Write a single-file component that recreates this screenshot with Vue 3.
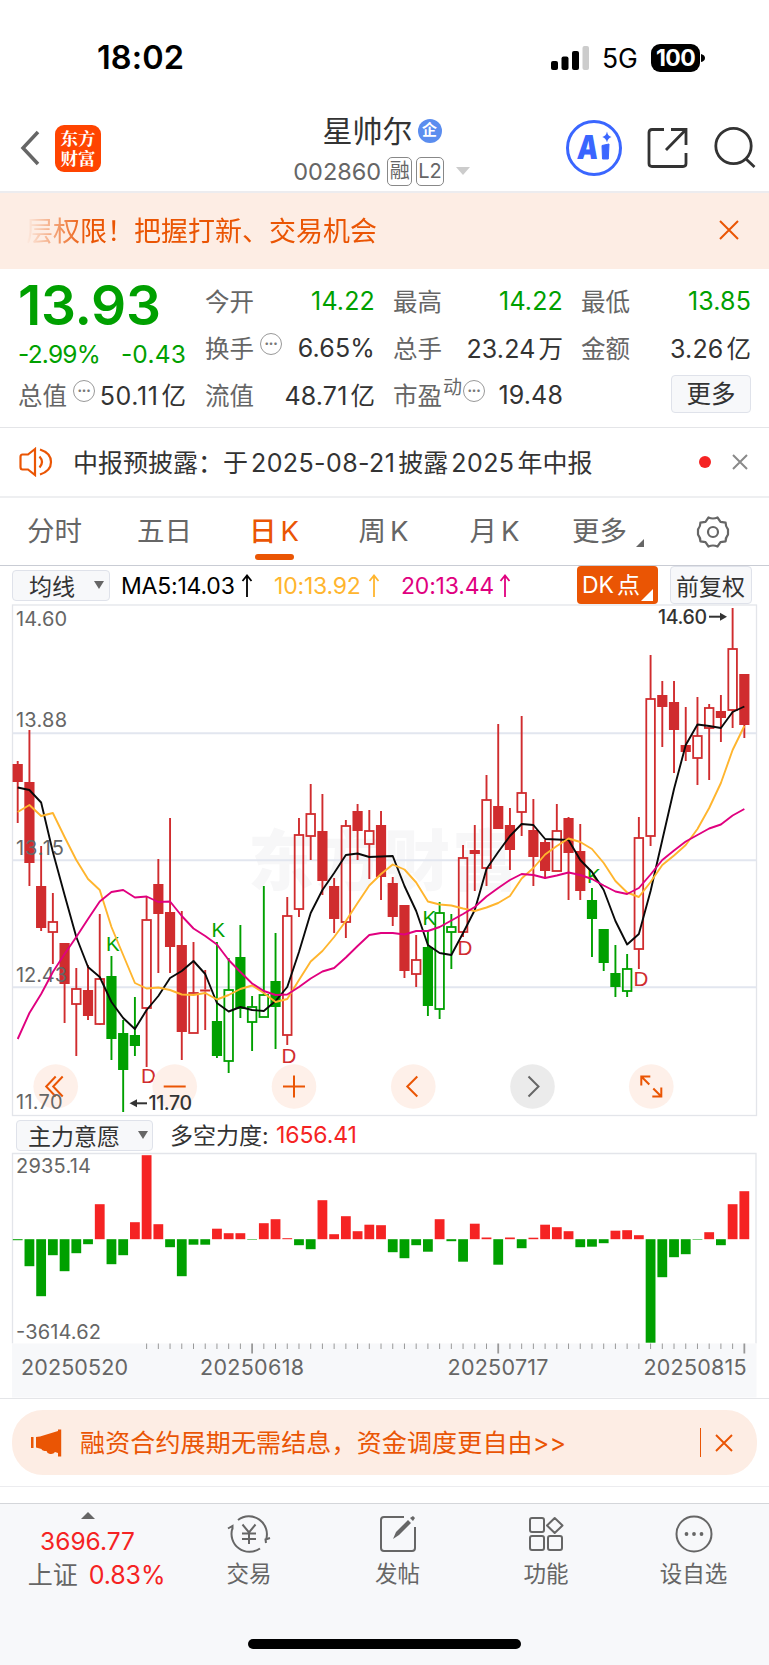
<template>
  <div class="page">
    <!-- Status Bar -->
    <div class="status-bar">
      <span class="time">18:02</span>
      <svg class="signal" width="38" height="26" viewBox="0 0 38 26">
        <rect x="0" y="16" width="7" height="9" rx="2" />
        <rect x="10.5" y="11.500" width="7" height="13.500" rx="2" />
        <rect x="21" y="6" width="7" height="19" rx="2" />
        <rect x="31.500" y="1" width="6.500" height="24" rx="2" fill="#ccc" />
      </svg>
      <span class="network">5G</span>
      <span class="battery">100</span>
      <svg class="nub" width="4" height="8" viewBox="0 0 4 8"><path d="M0 0Q4 1 4 4T0 8z" /></svg>
    </div>

    <!-- Header -->
    <header class="header">
      <svg class="back" width="20" height="36" viewBox="0 0 20 36"><path d="M18 2L3 18l15 16" fill="none" stroke="#666" stroke-width="3.500" /></svg>
      <div class="logo">东方财富</div>
      <div class="title">
        <div class="name">星帅尔<i class="corp">企</i></div>
        <div class="code"><span class="code-no">002860</span><em>融</em><em>L2</em><b class="down"></b></div>
      </div>
      <svg class="ai" width="58" height="58" viewBox="0 0 58 58">
        <circle cx="29" cy="29" r="26.500" fill="none" stroke="#3a66ff" stroke-width="3" />
        <text x="15" y="40" class="ai-text" transform="skewX(-5)" textLength="21" lengthAdjust="spacingAndGlyphs">A</text>
        <path d="M37 26.500L44 25L43.300 40H37.500z" fill="#3a66ff" stroke="#3a66ff" stroke-width="1" stroke-linejoin="round" />
        <path d="M42 12.500Q42.800 17.200 46.500 18Q42.800 19 42 23.500Q41 19 37.300 18Q41 17.200 42 12.500z" fill="#3a66ff" />
      </svg>
      <svg class="share" width="42" height="42" viewBox="0 0 42 42" fill="none" stroke="#333" stroke-width="2.800">
        <path d="M17 2.500H5Q2 2.500 2 5.500V36.500Q2 39.500 5 39.500H36Q39 39.500 39 36.500V26" />
        <path d="M24 2.500H39V18M39 2.500L19 23" />
      </svg>
      <svg class="search" width="42" height="44" viewBox="0 0 42 44" fill="none" stroke="#333" stroke-width="2.800">
        <circle cx="19.500" cy="20" r="17.700" /><path d="M31.500 32.500L40.500 41" />
      </svg>
    </header>

    <!-- Scrolling banner -->
    <div class="banner">
      <span class="banner-text">层权限！把握打新、交易机会</span>
      <svg width="20" height="20" viewBox="0 0 20 20"><path d="M1 1L19 19M19 1L1 19" stroke="#ea5504" stroke-width="2" /></svg>
    </div>

    <!-- Quote -->
    <section class="quote">
      <div class="q-main">
        <div class="price">13.93</div>
        <div class="change"><span class="pct">-2.99%</span><span>-0.43</span></div>
        <div class="cell total"><label>总值</label><i class="more-dot">•••</i><span class="val">50.11<u>亿</u></span></div>
      </div>
      <div class="q-grid">
        <div class="cell" v-for="c in cells" :key="c.label">
          <label>{{ c.label }}</label><sup v-if="c.sup">{{ c.sup }}</sup><i v-if="c.tip" class="more-dot">•••</i>
          <span class="val" :class="{ down: c.down }">{{ c.value }}<u v-if="c.unit">{{ c.unit }}</u></span>
        </div>
        <div class="cell last"><button class="btn-more">更多</button></div>
      </div>
    </section>

    <!-- Notice -->
    <div class="notice">
      <svg width="34" height="30" viewBox="0 0 34 30" fill="none" stroke="#ea5504" stroke-width="2.200">
        <path d="M16 2L9 7.500H3.500Q1.500 7.500 1.500 10V20Q1.500 22.500 3.500 22.500H9L16 28z" />
        <path d="M20.500 9.500Q25.500 15 20.500 20.500M21 2.500Q32 6 32 15T21 27.500" />
      </svg>
      <p>中报预披露：于<span>2025-08-21</span>披露<span>2025</span>年中报</p>
      <b class="dot"></b>
      <svg width="16" height="16" viewBox="0 0 16 16"><path d="M1 1L15 15M15 1L1 15" stroke="#8a8a8a" stroke-width="2" /></svg>
    </div>

    <!-- Period Tabs -->
    <nav class="tabs">
      <span v-for="t in tabs" :key="t.label" class="tab" :class="{ active: t.label === activeTab, menu: t.menu }">
        {{ t.label }}<u v-if="t.k">K</u>
      </span>
      <svg class="gear" width="34" height="34" viewBox="0 0 34 34" fill="none" stroke="#666" stroke-width="2.200">
        <path d="M12.500 2.500Q17 4.500 21.500 2.500L24.500 6.800L29.600 7.600Q29.400 11 32 14.500V19.500Q29.400 23 29.600 26.400L24.500 27.200L21.500 31.500Q17 29.500 12.500 31.500L9.500 27.200L4.400 26.400Q4.600 23 2 19.500V14.500Q4.600 11 4.400 7.600L9.500 6.800z" stroke-linejoin="round" />
        <circle cx="17" cy="17" r="5" />
      </svg>
    </nav>

    <!-- MA toolbar -->
    <div class="ma-bar">
      <div class="select sel-ma"><span>均线</span><b class="caret"></b></div>
      <div class="ma" v-for="m in maList" :key="m.text" :class="m.cls">
        <span>{{ m.text }}</span>
        <svg width="12" height="24" viewBox="0 0 12 24"><path d="M6 23V2M1.500 7L6 1.500L10.500 7" fill="none" stroke="currentColor" stroke-width="1.800" /></svg>
      </div>
      <div class="dk">DK<u>点</u></div>
      <div class="select fq">前复权</div>
    </div>

    <!-- K line chart -->
    <svg class="kline" width="769" height="514" viewBox="0 604 769 514">
      <text x="248" y="885" class="watermark" textLength="270">东方财富</text>
      <rect x="12.500" y="605" width="744" height="510.500" fill="none" stroke="#e3e5ea" stroke-width="1.300" />
      <path d="M13 733.200H756M13 860.300H756M13 987.300H756" stroke="#e2e6ef" stroke-width="1.900" />
      <g v-for="(c, i) in candles" :key="i" :stroke="c.color" :fill="c.hollow ? 'none' : c.color">
        <path :d="c.wick" stroke-width="1.900" />
        <rect :x="c.x - c.w / 2" :y="c.top" :width="c.w" :height="c.h" :stroke-width="c.hollow ? 1.800 : 0" />
      </g>
      <text v-for="l in priceLabels" :key="l.text" x="16" :y="l.y" class="axis" :textLength="l.w">{{ l.text }}</text>
      <text v-for="m in marks" :key="m.x" :x="m.x" :y="m.y" class="mark" :fill="m.t === 'K' ? GREEN : RED">{{ m.t }}</text>
      <g v-for="b in tools" :key="b.x" :transform="`translate(${b.x} 1086.500)`">
        <circle r="22.300" :fill="b.off ? '#ebebeb' : '#fef0e9'" />
        <path :d="b.d" fill="none" :stroke="b.off ? '#666' : '#ea5504'" stroke-width="2" />
      </g>
      <text x="16" y="1109" class="axis" textLength="46.500">11.70</text>
      <polyline v-for="l in lines" :key="l.color" :points="l.points" :stroke="l.color" fill="none" stroke-width="1.900" stroke-linejoin="round" />
      <text x="658" y="624" class="extreme" textLength="49">14.60</text>
      <path d="M709 616.700H722" stroke="#333" stroke-width="2" /><path d="M720 612.700L727 616.700L720 620.700z" fill="#333" />
      <text x="148.500" y="1110" class="extreme" textLength="43.500">11.70</text>
      <path d="M135 1103.300H147" stroke="#333" stroke-width="2" /><path d="M137 1099.300L129.500 1103.300L137 1107.300z" fill="#333" />
    </svg>

    <!-- Indicator toolbar -->
    <div class="sub-bar">
      <div class="select sel-sub"><span>主力意愿</span><b class="caret"></b></div>
      <span class="sub-label">多空力度:</span><span class="sub-val">1656.41</span>
    </div>

    <!-- Indicator chart -->
    <svg class="indicator" width="769" height="246" viewBox="0 1152 769 246">
      <path d="M12.500 1343.500V1153.500H756V1343.500" fill="none" stroke="#e3e5ea" stroke-width="1.300" />
      <rect x="12" y="1343.500" width="744.500" height="54" fill="#f7f8fa" />
      <rect
        v-for="(v, i) in power" :key="i"
        :x="px(i) - 4.900" :y="v > 0 ? 1239.200 - v : 1239.200" width="9.800" :height="Math.abs(v)"
        :fill="v > 0 ? '#f52323' : GREEN"
      />
      <path v-for="t in ticks" :key="t.x" :d="`M${t.x} 1343.500v${t.big ? 10 : 5.500}`" stroke="#999" :stroke-width="t.big ? 1.800 : 1" />
      <text x="16" y="1173" class="axis" textLength="75">2935.14</text>
      <text x="16" y="1339" class="axis" textLength="85">-3614.62</text>
      <text v-for="d in dates" :key="d.text" :x="d.x" y="1375" class="date" :textLength="d.w">{{ d.text }}</text>
    </svg>

    <!-- Promo -->
    <div class="promo-wrap">
      <div class="promo">
        <svg width="31" height="28" viewBox="0 0 31 28" fill="#ea5504">
          <path d="M0 8h2.500v11H0zM5 8L9 7.500L27 2V0.500h3.200V27.500H27V24L24 23Q22.500 25.500 19 25Q16 24.500 15.500 22Q11 22 10.500 20L5 18.500z" />
        </svg>
        <p>融资合约展期无需结息，资金调度更自由&gt;&gt;</p>
        <b class="bar"></b>
        <svg width="18" height="18" viewBox="0 0 18 18"><path d="M1 1L17 17M17 1L1 17" stroke="#ea5504" stroke-width="1.900" /></svg>
      </div>
    </div>

    <!-- Bottom Bar -->
    <footer class="bottom">
      <div class="index">
        <b class="up"></b>
        <div class="idx-val">3696.77</div>
        <div class="idx-row"><span>上证</span><span class="idx-pct">0.83%</span></div>
      </div>
      <div class="action">
        <svg width="44" height="38" viewBox="0 0 44 38" fill="none" stroke="#666" stroke-width="2">
          <path d="M11 5A18 18 0 0 1 39 25M39 28L38.500 24.500L43 23M33 33.500A18 18 0 0 1 5.500 13M1 13.500L5.500 11V14.500" />
          <path d="M15.500 9.500L22 17.500L28.500 9.500M22 17.500V29M15 18.500H29M15 24H29" />
        </svg>
        <span>交易</span>
      </div>
      <div class="action">
        <svg width="38" height="38" viewBox="0 0 38 38" fill="none" stroke="#666" stroke-width="2">
          <path d="M25 2H5Q2 2 2 5V33Q2 36 5 36H33Q36 36 36 33V12" />
          <path d="M14 24L17 17L29 5L32 8L20 20zM31 3L34 1L36 3L34 6z" fill="#666" stroke="none" />
        </svg>
        <span>发帖</span>
      </div>
      <div class="action">
        <svg width="36" height="38" viewBox="0 0 36 38" fill="none" stroke="#666" stroke-width="2">
          <rect x="2" y="3" width="14" height="14" rx="2" /><rect x="2" y="21" width="14" height="14" rx="2" />
          <rect x="20" y="21" width="14" height="14" rx="2" /><path d="M26.700 3L34.500 10.500L26.700 18L19 10.500z" stroke-linejoin="round" />
        </svg>
        <span>功能</span>
      </div>
      <div class="action">
        <svg width="38" height="38" viewBox="0 0 38 38" fill="#666">
          <circle cx="19" cy="19" r="17.500" fill="none" stroke="#666" stroke-width="2" />
          <circle cx="11.500" cy="19" r="1.900" /><circle cx="19" cy="19" r="1.900" /><circle cx="26.500" cy="19" r="1.900" />
        </svg>
        <span>设自选</span>
      </div>
      <div class="home"></div>
    </footer>
  </div>
</template>

<script setup>
import { ref, computed } from 'vue'

const RED = '#d02c2e'
const GREEN = '#00a000'

const cells = [
  { label: '今开', value: '14.22', down: true },
  { label: '最高', value: '14.22', down: true },
  { label: '最低', value: '13.85', down: true },
  { label: '换手', value: '6.65%', tip: true },
  { label: '总手', value: '23.24', unit: '万' },
  { label: '金额', value: '3.26', unit: '亿' },
  { label: '流值', value: '48.71', unit: '亿' },
  { label: '市盈', value: '19.48', sup: '动', tip: true },
]

const activeTab = ref('日')
const tabs = [
  { label: '分时' },
  { label: '五日' },
  { label: '日', k: true },
  { label: '周', k: true },
  { label: '月', k: true },
  { label: '更多', menu: true },
]

const maList = [
  { text: 'MA5:14.03', cls: 'ma5' },
  { text: '10:13.92', cls: 'ma10' },
  { text: '20:13.44', cls: 'ma20' },
]

// x centre of the i-th trading day
const px = i => 17.7 + i * 11.72

// type (r/g filled, R/G hollow), high, body top, body bottom, low
const kdata = [
  ['r', 761, 764, 782, 823], ['r', 730, 782, 863, 886], ['r', 846, 886, 928, 931], ['R', 893, 922, 932, 964],
  ['r', 943, 943, 984, 1023], ['R', 968, 989, 1004, 1056], ['r', 965, 990, 1016, 1020], ['R', 914, 979, 1024, 1025],
  ['g', 956, 976, 1039, 1060], ['g', 1020, 1033, 1070, 1112], ['g', 997, 1035, 1046, 1056], ['R', 897, 920, 1008, 1067],
  ['r', 859, 884, 914, 973], ['r', 818, 912, 947, 973], ['r', 911, 945, 1032, 1060], ['R', 942, 993, 1033, 1033],
  ['r', 970, 989.5, 991.5, 1030], ['g', 942, 1021, 1056, 1058], ['G', 958, 990, 1061, 1073], ['g', 925, 957, 1009, 1018],
  ['G', 996, 1007, 1022, 1051], ['G', 886, 995, 1017, 1017], ['g', 933, 981, 1007, 1049], ['R', 897, 916, 1035, 1045],
  ['R', 818, 835, 909, 917], ['R', 784, 814, 836, 860], ['r', 794, 831, 881, 895], ['r', 878, 886, 919, 933],
  ['R', 820, 826, 922, 938], ['r', 804, 811, 831, 860], ['R', 810, 831, 844, 879], ['r', 811, 825, 877, 900],
  ['r', 877, 883, 917, 926], ['r', 905, 905, 971, 978], ['R', 935, 960, 974, 987], ['g', 930, 947, 1006, 1016],
  ['G', 902, 913, 1009, 1019], ['G', 914, 927, 932, 969], ['R', 845, 858, 932, 937], ['r', 825, 850, 854, 891],
  ['R', 775, 800, 868, 886], ['r', 724, 806, 829, 829], ['r', 808, 825, 850, 870], ['R', 716, 793, 812, 836],
  ['r', 799, 830, 857, 886], ['r', 840, 842, 871, 879], ['R', 804, 831, 871, 871], ['r', 817, 818, 853, 900],
  ['r', 824, 851, 891, 900], ['g', 888, 900, 919, 957], ['g', 929, 929, 963, 971], ['g', 945, 973, 987, 997],
  ['G', 954, 969, 991, 997], ['R', 817, 838, 949, 969], ['R', 655, 699, 836, 846], ['r', 681, 695, 707, 747],
  ['r', 681, 702, 730, 773], ['r', 707, 745, 752, 761], ['R', 697, 736, 758, 785], ['R', 704, 708, 728, 780],
  ['r', 695, 711, 718, 742], ['R', 608, 649, 710, 728], ['r', 674, 674, 725, 738],
]

const candles = computed(() => kdata.map(([t, high, top, bottom, low], i) => {
  const x = px(i)
  const hollow = t === 'R' || t === 'G'
  return {
    x, top, hollow,
    w: hollow ? 8.6 : 10.2,
    h: bottom - top,
    color: t.toLowerCase() === 'r' ? RED : GREEN,
    wick: `M${x} ${high}V${top}M${x} ${bottom}V${low}`,
  }
}))

const ma5 = [
  787.5, 790, 802.5, 852, 895, 937, 967, 977, 1002, 1018, 1029, 1010, 996, 978, 971, 961, 974, 1003, 1011.5, 1007,
  1010, 1011, 1001, 987, 952, 913, 890, 873, 855, 853.5, 857, 856.5, 856, 886, 911, 945, 953, 955, 933, 910,
  869, 852, 836, 824, 825, 839, 839.5, 840, 860, 872, 890, 921, 944.5, 934, 891, 840, 789, 745, 724.5, 726,
  728, 712, 706.5,
]
const ma10 = [
  812, 805, 816, 813, 837, 860, 879, 890, 927, 955, 983, 988.5, 987.5, 990, 994.5, 995, 993, 999.5, 995, 989,
  985.5, 993, 1002, 999, 980, 961.5, 951, 937, 921, 903, 885.5, 874, 864.5, 869.5, 882.5, 901.5, 904.5, 905.5, 908.5, 911,
  907.5, 903, 896, 878.5, 868, 854.5, 846, 838.5, 842, 849, 863, 881, 892.5, 897, 882, 865, 855.5, 845, 829, 808,
  783, 750, 726,
]
const ma20 = [
  1039, 1013, 994, 972, 954, 937, 919, 901.5, 892, 890, 897.5, 896.5, 902, 901.5, 916, 928.5, 936, 944.5, 960, 972,
  983.5, 991, 995, 994.5, 987, 978.5, 971.5, 968, 957.5, 946, 935, 933, 933, 934.5, 931, 931, 927, 920.5, 914, 907,
  896.5, 888, 880, 874, 875, 878, 875.5, 872.5, 875, 879, 885.5, 891.5, 894, 888, 874.5, 860, 850.5, 841.5, 835, 828.5,
  824.5, 815.5, 809,
]
const toPoints = arr => arr.map((y, i) => `${px(i)},${y}`).join(' ')
const lines = [
  { color: '#0a0a0a', points: toPoints(ma5) },
  { color: '#ffb52e', points: toPoints(ma10) },
  { color: '#e0007f', points: toPoints(ma20) },
]

const priceLabels = [
  { text: '14.60', y: 626, w: 51 },
  { text: '13.88', y: 726.5, w: 51 },
  { text: '13.15', y: 854.5, w: 48 },
  { text: '12.43', y: 981.5, w: 51 },
]

const marks = [
  { t: 'K', x: 106, y: 950.5 },
  { t: 'D', x: 141, y: 1083 },
  { t: 'K', x: 211.5, y: 936.5 },
  { t: 'D', x: 281.5, y: 1062.5 },
  { t: 'K', x: 422.5, y: 924.5 },
  { t: 'D', x: 457.5, y: 954.5 },
  { t: 'K', x: 587, y: 882.5 },
  { t: 'D', x: 633.5, y: 986 },
]

const tools = [
  { x: 55.7, d: 'M0 -10L-9.5 0L0 10M7 -10L-2.500 0L7 10' },
  { x: 174.7, d: 'M-11 0H11' },
  { x: 294, d: 'M-11 0H11M0 -11V11' },
  { x: 413.3, d: 'M4 -10L-6 0L4 10' },
  { x: 532.5, d: 'M-4 -10L6 0L-4 10', off: true },
  { x: 651.3, d: 'M-10 -1V-10H-1M-10 -10L-2 -2M10 1V10H1M10 10L2 2' },
]

// bar heights around the zero line
const power = [
  -1, -27, -57, -16, -32, -14, -5, 35, -25, -16, 17, 84, 15, -8, -37, -5.5, -5.5, 10.5, 6, 6,
  -0.5, 16, 20, 1, -6, -10, 39, 5, 23, 8, 14.5, 14, -13, -19, -6, -12.5, 20, -2, -22.5, 15.5,
  1.7, -25.5, 1.7, -9, 1.5, 14.5, 12, 8, -8, -7.5, -4, 8.5, 9, 4, -103.5, -38, -18, -15, -0.5, 7,
  -6, 35, 48,
]

const ticks = Array.from({ length: 52 }, (_, k) => k + 11)
  .map(i => ({ x: px(i), big: [20, 41, 62].includes(i) }))

const dates = [
  { text: '20250520', x: 21, w: 107 },
  { text: '20250618', x: 200, w: 104 },
  { text: '20250717', x: 447.5, w: 101 },
  { text: '20250815', x: 643.5, w: 103 },
]
</script>

<style>
body { background: #fff; }
</style>

<style scoped>
.page {
  width: 769px; height: 1665px; overflow: hidden; background: #fff; color: #333;
  font-family: Inter, "Noto Sans CJK SC", sans-serif; font-size: 24px;
}
.page * { box-sizing: border-box; }
u { text-decoration: none; }
em, i { font-style: normal; }
p { margin: 0; }
svg { display: block; flex: none; }

/* Status Bar */
.status-bar { height: 105px; display: flex; align-items: center; padding: 10px 0 0 97px; color: #000; }
.time { width: 454px; font-size: 32.500px; font-weight: 600; letter-spacing: 0.1px; }
.network { margin-left: 13px; width: 49px; font-size: 26.500px; }
.battery {
  width: 49px; height: 28px; line-height: 28px; border-radius: 9px; background: #000; color: #fff;
  text-align: center; font-size: 23px; font-weight: 700; letter-spacing: -0.6px;
}
.nub { margin-left: 1px; }

/* Header */
.header { height: 88px; display: flex; align-items: center; padding-left: 20px; border-bottom: 2px solid #ececef; }
.logo {
  margin-left: 15px; width: 46px; height: 47px; border-radius: 9px; background: #ff4400; color: #fff;
  padding: 3px 5px 0; text-align: center; word-break: break-all; flex: none;
  font-family: "Noto Serif CJK SC", "Noto Sans CJK SC", sans-serif; font-weight: 700; font-size: 17.500px; line-height: 20px;
}
.title { width: 464px; display: flex; flex-direction: column; align-items: center; padding: 4px 0 0 94px; flex: none; }
.name { display: flex; align-items: center; font-size: 30px; line-height: 42px; height: 42px; margin-left: 4px; }
.corp {
  width: 24px; height: 24px; border-radius: 50%; background: #5b8def; color: #fff; margin-left: 5px;
  font-size: 15px; font-weight: 700; line-height: 22px; text-align: center;
}
.code { display: flex; align-items: center; height: 38px; color: #666; font-size: 23.500px; margin-left: 3px; }
.code-no { margin-right: 6px; letter-spacing: 0; }
.code em {
  height: 29px; min-width: 25px; line-height: 26px; border: 1.500px solid #888; border-radius: 5px;
  padding: 0 1px; margin-right: 4px; font-size: 20px; text-align: center;
}
.code .down { border: 7px solid transparent; border-top: 8px solid #ccc; border-bottom: 0; margin-left: 8px; }
.ai { margin-left: 0; }
.ai-text { font: 900 33px Inter, sans-serif; fill: #3a66ff; }
.share { margin-left: 24px; }
.search { margin-left: 25px; }

/* Banner */
.banner {
  height: 76px; background: #fdede4; display: flex; align-items: center; justify-content: space-between;
  padding: 0 30px 0 26px; color: #ea5504; font-size: 27px;
}
.banner svg { margin-top: -2px; }
.banner-text { margin-top: -4px; -webkit-mask-image: linear-gradient(90deg, transparent 0, #000 60px); mask-image: linear-gradient(90deg, transparent 0, #000 60px); }

/* Quote */
.quote { height: 159px; display: flex; padding: 9px 18px 0 18px; border-bottom: 1.500px solid #e4e5e8; }
.q-main { width: 169px; margin-right: 19px; }
.price { height: 54px; line-height: 54px; font-size: 55px; font-weight: 600; color: #00a000; letter-spacing: -0.3px; }
.change { height: 40px; padding-top: 7px; line-height: 31px; display: flex; justify-content: space-between; color: #00a000; font-size: 24.500px; letter-spacing: 0.2px; }
.pct { letter-spacing: -0.8px; }
.q-grid { flex: 1; display: grid; grid-template-columns: 170px 170px 170px; column-gap: 18px; grid-auto-rows: 47px; }
.cell { display: flex; align-items: center; height: 47px; white-space: nowrap; padding-bottom: 2px; }
.cell label { font-size: 24.500px; color: #666; }
.cell .val { margin-left: auto; font-size: 25px; letter-spacing: 0.15px; }
.cell .val u { margin-left: 3px; font-size: 24.500px; letter-spacing: 0; }
.cell .val.down { color: #00a000; }
.cell sup { font-size: 19px; color: #666; margin: -14px 0 0 1px; line-height: 20px; }
.cell.total .val { letter-spacing: 0.6px; }
.more-dot {
  width: 22px; height: 22px; border: 1.700px solid #999; border-radius: 50%; color: #777; flex: none;
  font-size: 8px; line-height: 18px; text-align: center; margin: -8px 0 0 6px; letter-spacing: -0.2px;
}
sup + .more-dot { margin-left: 1px; }
.cell.last { justify-content: flex-end; }
.btn-more {
  width: 80px; height: 38px; border: 1.500px solid #dfe2ea; border-radius: 4px; background: #f7f8fa; color: #333;
  font: 24.500px/33px Inter, "Noto Sans CJK SC", sans-serif; padding: 0; margin-top: -1px;
}

/* Notice */
.notice { height: 70px; display: flex; align-items: center; padding: 0 21px 0 19px; border-bottom: 2px solid #eeeff1; }
.notice p { flex: 1; margin: -3px 0 0 20px; font-size: 25px; }
.notice p span { margin: 0 3px; letter-spacing: 0.4px; }
.dot { width: 12px; height: 12px; border-radius: 50%; background: #f52323; margin-right: 21px; }

/* Tabs */
.tabs { height: 68px; display: grid; grid-template-columns: 109px 111px 108px 111px 111px 99px 114px; align-items: center; border-bottom: 1.500px solid #c9ccd4; color: #666; font-size: 27.500px; }
.tab { text-align: center; position: relative; line-height: 65px; height: 66px; }
.tab u { margin-left: 4px; }
.tab.active { color: #ea5504; font-weight: 500; }
.tab.active u { font-weight: 400; }
.tab.active::after { content: ""; position: absolute; left: 50%; bottom: 5px; width: 39px; height: 6px; margin-left: -19px; border-radius: 3px; background: #ea5504; }
.tab.menu::after { content: ""; position: absolute; right: 5px; bottom: 18px; border-left: 8px solid transparent; border-bottom: 8px solid #666; }
.gear { margin-left: 47px; }

/* MA toolbar */
.ma-bar { height: 38px; display: flex; align-items: center; padding-left: 12px; font-size: 23px; }
.select { border: 1.500px solid #dfe2ea; border-radius: 4px; background: #f7f8fa; display: flex; align-items: center; color: #333; font-size: 23px; white-space: nowrap; }
.caret { border: 5px solid transparent; border-top: 8px solid #666; border-bottom: 0; }
.sel-ma { width: 98px; height: 31px; padding-left: 16px; }
.sel-ma .caret { margin-left: 19px; }
.ma { display: flex; align-items: center; justify-content: space-between; letter-spacing: -0.2px; padding-top: 1px; }
.ma5 { width: 132px; margin-left: 11px; color: #000; }
.ma10 { width: 106px; margin-left: 21px; color: #ffb52e; }
.ma20 { width: 110px; margin-left: 21px; color: #e0007f; }
.dk {
  width: 81px; height: 38px; line-height: 38px; margin-left: 66px; padding-left: 5px; background: #ea5504; color: #fff;
  border-radius: 4px; position: relative; white-space: nowrap;
}
.dk u { margin-left: 3px; }
.dk::after { content: ""; position: absolute; right: 5px; bottom: 3px; border-left: 12px solid transparent; border-bottom: 12px solid #fff; }
.fq { width: 82px; height: 38px; margin-left: 12px; justify-content: center; padding-right: 1px; }

/* Charts */
.axis { font: 20px Inter, sans-serif; fill: #666; }
.date { font: 21.500px Inter, sans-serif; fill: #666; }
.mark { font: 20.500px "Liberation Sans", sans-serif; }
.extreme { font: 500 19.500px Inter, sans-serif; fill: #333; }
.watermark { font: 900 66px "Noto Sans CJK SC", sans-serif; fill: #f7f7f8; }

/* Indicator toolbar */
.sub-bar { height: 34px; display: flex; align-items: center; padding-left: 16px; }
.select span { margin-top: -1px; }
.sel-sub { width: 137px; height: 31px; padding-left: 11px; }
.sel-sub .caret { margin-left: 18px; }
.sub-label { margin: -2px 0 0 17px; font-size: 23px; width: 106px; }
.sub-val { color: #f52323; font-size: 23px; letter-spacing: -0.1px; }

/* Promo */
.promo-wrap { height: 89px; border-top: 1.500px solid #e4e5e8; border-bottom: 1.500px solid #ececef; padding: 11px 12px; }
.promo { height: 65px; border-radius: 31px; background: #fdede4; display: flex; align-items: center; padding: 0 24px 0 19px; color: #ea5504; }
.promo p { flex: 1; margin: -3px 0 0 18px; font-size: 25px; letter-spacing: 0.15px; }
.bar { width: 1.500px; height: 29px; background: #ea5504; margin-right: 14px; }

/* Bottom Bar */
.bottom {
  margin-top: 16px; height: 162px; background: #f7f8fa; border-top: 1.500px solid #d4d6da; position: relative;
  display: grid; grid-template-columns: 175px 148px 149px 148px 147px;
}
.index { display: flex; flex-direction: column; align-items: center; padding-top: 8px; }
.up { border: 7px solid transparent; border-bottom: 7px solid #666; border-top: 0; }
.idx-val { color: #f52323; font-size: 24.500px; letter-spacing: 0; line-height: 34px; margin-top: 5px; }
.idx-row { display: flex; align-items: center; font-size: 25px; color: #666; line-height: 34px; margin-left: 18px; }
.idx-pct { color: #f52323; font-size: 25px; letter-spacing: -0.1px; margin-left: 11px; }
.action { display: flex; flex-direction: column; align-items: center; padding-top: 11px; color: #666; font-size: 22.500px; }
.action span { line-height: 32px; margin-top: 5px; }
.home { position: absolute; left: 248px; bottom: 16px; width: 273px; height: 10px; border-radius: 5px; background: #000; }
</style>
